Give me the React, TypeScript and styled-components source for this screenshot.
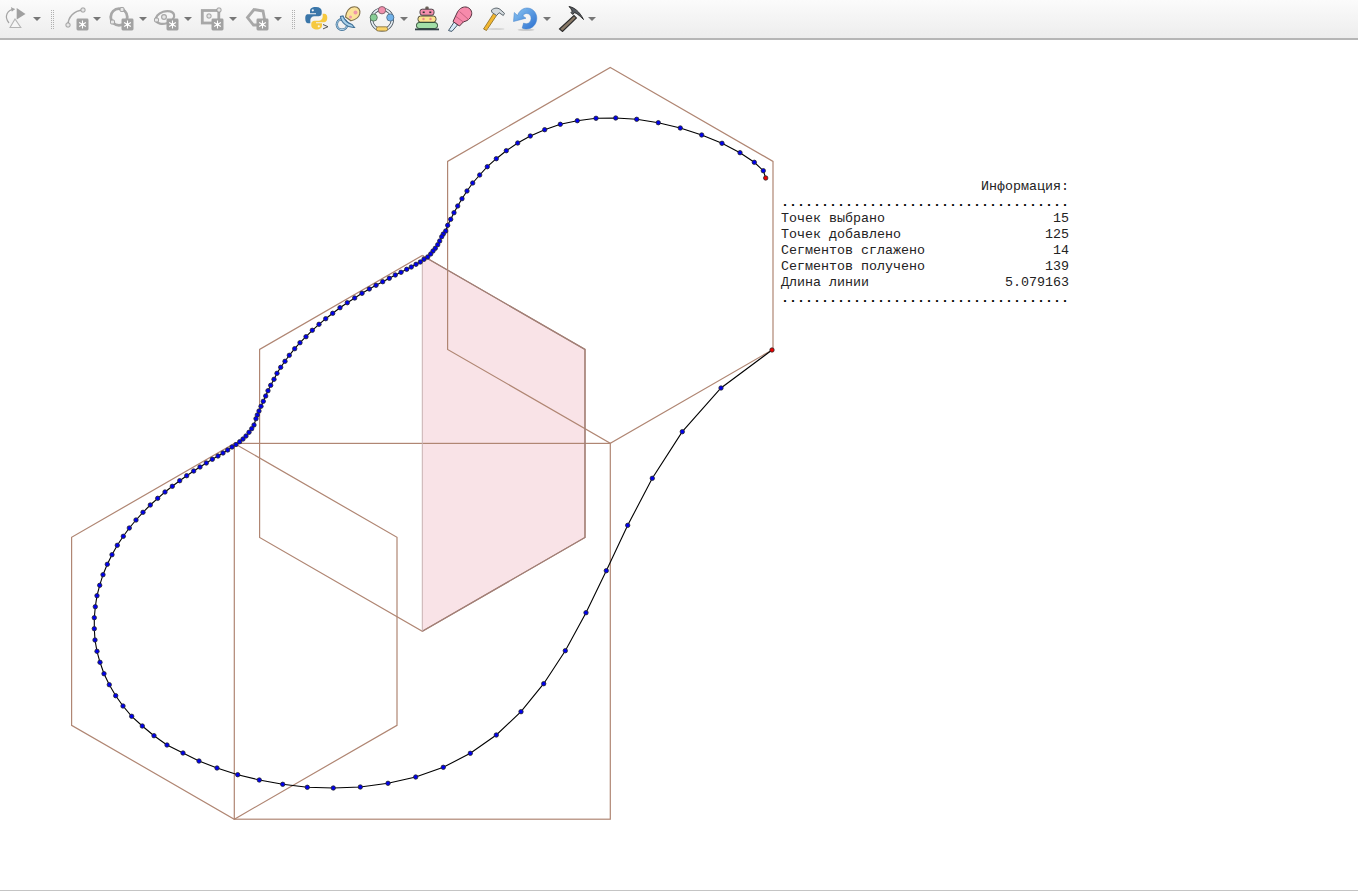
import React from "react";
import styled, { createGlobalStyle } from "styled-components";

const Global = createGlobalStyle`
  html, body { margin: 0; padding: 0; height: 100%; background: #fff; overflow: hidden; }
  #root { height: 100%; }
`;

const Page = styled.div`
  display: flex;
  flex-direction: column;
  height: 891px;
  width: 1358px;
`;

const Toolbar = styled.div`
  flex: 0 0 38px;
  display: flex;
  align-items: center;
  background: linear-gradient(#fbfbfb, #ededed);
  border-bottom: 2px solid #b6b6b6;
`;

const Icon = styled.svg.attrs({ width: 26, height: 26, viewBox: "0 0 26 26" })<{ $ml: number }>`
  flex: none;
  margin-left: ${(p) => p.$ml}px;
`;

const Caret = styled.span<{ $ml: number }>`
  flex: none;
  width: 0;
  height: 0;
  margin-left: ${(p) => p.$ml}px;
  border-left: 4.5px solid transparent;
  border-right: 4.5px solid transparent;
  border-top: 4.5px solid #777;
`;

const Grip = styled.span<{ $ml: number }>`
  flex: none;
  width: 3px;
  height: 19px;
  margin-left: ${(p) => p.$ml}px;
  background-image: radial-gradient(circle at 0.5px 0.5px, #b0b0b0 0.6px, transparent 0.7px);
  background-size: 2px 2px;
`;

const Canvas = styled.main`
  position: relative;
  flex: 1;
  background: #fff;
`;

const Drawing = styled.svg`
  display: block;
  width: 1358px;
  height: 849px;
`;

const StatusEdge = styled.div`
  flex: 0 0 1px;
  background: #c4c4c4;
`;

const InfoPanel = styled.section`
  position: absolute;
  left: 781px;
  top: 139px;
  width: 288px;
  font-family: "Liberation Mono", "Courier New", monospace;
  font-size: 13.33px;
  line-height: 16px;
  color: #222;
  white-space: pre;
`;

const InfoTitle = styled.div`
  text-align: right;
`;

const InfoDots = styled.div`
  font-weight: 700;
  overflow: hidden;
  color: #000;
`;

const InfoRow = styled.div`
  display: flex;
  justify-content: space-between;
`;

const GRAY = "#a8a8a8";

const Badge = ({ x, y }: { x: number; y: number }) => (
  <g>
    <rect x={x - 0.5} y={y - 0.5} width="12" height="12" rx="1.4" fill="#a2a2a2" />
    <g stroke="#fff" strokeWidth="1.1" fill="none">
      <path d={`M${x + 5.5} ${y + 1.6}v7.8M${x + 2.1} ${y + 3.5}l6.8 4M${x + 8.9} ${y + 3.5}l-6.800 4`} />
    </g>
    <circle cx={x + 5.5} cy={y + 5.5} r="1.5" fill="#fff" />
  </g>
);

const Node = ({ x, y }: { x: number; y: number }) => (
  <rect x={x - 2} y={y - 2} width="4" height="4" rx="1.2" fill="#e6e6e6" stroke="#9a9a9a" strokeWidth="1" />
);

const RotateTool = ({ ml }: { ml: number }) => (
  <Icon $ml={ml}>
    <path d="M14.700 2L23.500 8l-8.800 5.500z" fill="#a0a0a0" />
    <path d="M8 21.500l5-8.500 5.800 8.500z" fill="#f6f6f6" stroke="#b4b4b4" strokeWidth="1.100" />
    <path d="M12.500 3.200C5.500 3.600 1.500 10.500 7 17" fill="none" stroke="#a4a4a4" strokeWidth="1.200" />
    <path d="M9 1l3.800 2.200-3 2.600z" fill="#a4a4a4" />
  </Icon>
);

const ArcTool = ({ ml }: { ml: number }) => (
  <Icon $ml={ml}>
    <path d="M3 19C3 11 9 4.500 18 4" fill="none" stroke={GRAY} strokeWidth="1.500" />
    <Node x={3} y={19} />
    <Node x={18} y={4} />
    <Badge x={12} y={13} />
  </Icon>
);

const CircleTool = ({ ml }: { ml: number }) => (
  <Icon $ml={ml}>
    <circle cx="11" cy="11" r="8.300" fill="none" stroke={GRAY} strokeWidth="2.800" />
    <Node x={14} y={3.500} />
    <Node x={4.500} y={16} />
    <Badge x={14} y={13} />
  </Icon>
);

const EllipseTool = ({ ml }: { ml: number }) => (
  <Icon $ml={ml}>
    <ellipse cx="12" cy="11.500" rx="9.500" ry="6" transform="rotate(-18 12 11.500)" fill="none" stroke={GRAY} strokeWidth="2.200" />
    <circle cx="11" cy="11" r="2.400" fill="#e6e6e6" stroke={GRAY} strokeWidth="1.200" />
    <Node x={3.500} y={14} />
    <Badge x={14} y={13} />
  </Icon>
);

const RectTool = ({ ml }: { ml: number }) => (
  <Icon $ml={ml}>
    <rect x="3.300" y="4.500" width="16.500" height="12.500" fill="none" stroke={GRAY} strokeWidth="2.800" />
    <Node x={10} y={10} />
    <Node x={20} y={4} />
    <Badge x={13} y={13} />
  </Icon>
);

const PolygonTool = ({ ml }: { ml: number }) => (
  <Icon $ml={ml}>
    <path d="M3.500 11.500L10 3.500l9 1.500 1.500 8-5 6H9.500z" fill="none" stroke={GRAY} strokeWidth="2.800" />
    <Badge x={13} y={13} />
  </Icon>
);

const PythonTool = ({ ml }: { ml: number }) => (
  <Icon $ml={ml}>
    <path d="M13 1C8.300 1 7 2.700 7 5v2.300h6v1H4.800C2.500 8.300 2.300 10.500 2.300 12.700s.700 4.600 2.800 4.600h2.200v-3c0-2.300 1.700-4 4-4h4.300c1.800 0 3.100-1.300 3.100-3.100V5c0-2.300-1.900-4-5.700-4z" fill="#3a76a9" />
    <circle cx="9.800" cy="4.300" r="1.100" fill="#f2f6fa" />
    <path d="M13 23.500c4.500 0 6-1.700 6-4v-2.300h-6v-1h8.300c2.300 0 3-2.200 3-4.400S23.500 7.700 21.300 7.700h-1.600v3c0 2.300-1.700 4-4 4h-4.300c-1.800 0-3.100 1.300-3.100 3.100v1.700c0 2.300 2.200 4 5.700 4z" fill="#f6c93f" />
    <circle cx="15.800" cy="20.300" r="1.100" fill="#fff8dc" />
    <path d="M20 18.500l5 2.200-5 2.200" fill="#eee" stroke="#555" strokeWidth="1" />
  </Icon>
);

const PacifierTool = ({ ml }: { ml: number }) => (
  <Icon $ml={ml}>
    <circle cx="7" cy="18.500" r="5.200" fill="none" stroke="#3f7097" strokeWidth="2.400" />
    <circle cx="7" cy="18.500" r="5.200" fill="none" stroke="#b5d8ee" strokeWidth="1" />
    <path d="M8 10c1.500 4 4.500 7 9 8.500l2.500 3c-6.500.5-13.500-4.500-14-11z" fill="#a9d1ea" stroke="#3f7097" strokeWidth="1.100" />
    <path d="M10.500 11C11 6 14 .800 19.500.800c4 0 6 3.200 5.300 6.700-.7 4-5 6.500-8.800 7.300z" fill="#fbe39a" stroke="#7f6f4a" strokeWidth="1.100" />
    <circle cx="20.500" cy="6.500" r="2" fill="#ef97aa" />
    <circle cx="15.500" cy="11" r="1.500" fill="#ef97aa" />
  </Icon>
);

const RingsTool = ({ ml }: { ml: number }) => (
  <Icon $ml={ml}>
    <circle cx="13" cy="13.500" r="10.400" fill="none" stroke="#46505a" strokeWidth="3.200" />
    <circle cx="13" cy="13.500" r="10.400" fill="none" stroke="#e8f0f6" strokeWidth="1.500" />
    <circle cx="13" cy="4.200" r="3.700" fill="#f08fac" stroke="#6c5560" strokeWidth=".8" />
    <circle cx="4.700" cy="11.500" r="3.600" fill="#86cd95" stroke="#4e6a55" strokeWidth=".8" />
    <circle cx="21.300" cy="11.500" r="3.600" fill="#70b2ea" stroke="#4a6a86" strokeWidth=".8" />
    <rect x="7.500" y="20.800" width="11" height="4.200" rx="1.600" fill="#f9d36a" stroke="#7d6a3a" strokeWidth=".8" />
  </Icon>
);

const ToyTool = ({ ml }: { ml: number }) => (
  <Icon $ml={ml}>
    <rect x="11.300" y=".5" width="3.400" height="3" rx="1.200" fill="#6a6258" />
    <rect x="6" y="3.200" width="14" height="6" rx="2.200" fill="#f58fae" stroke="#4f4248" strokeWidth="1" />
    <rect x="8.700" y="5.500" width="2" height="1.600" fill="#333" />
    <rect x="15.300" y="5.500" width="2" height="1.600" fill="#333" />
    <rect x="4" y="10" width="18" height="6.200" rx="2.600" fill="#fbe38e" stroke="#4f4d38" strokeWidth="1" />
    <circle cx="9.500" cy="13" r="1.200" fill="#e88" />
    <circle cx="16.500" cy="13" r="1.200" fill="#e88" />
    <rect x="2.500" y="16.500" width="21" height="6" rx="2.600" fill="#a2dfa8" stroke="#34503a" strokeWidth="1" />
    <rect x="1" y="22.500" width="24" height="1.800" fill="#35444a" />
  </Icon>
);

const PipetteTool = ({ ml }: { ml: number }) => (
  <Icon $ml={ml}>
    <path d="M7.500 15.500L1.500 24.500l1.500 .5 2 .3L10.500 19z" fill="#d6eaf8" stroke="#44586a" strokeWidth="1" />
    <path d="M6 15.500L10 7c1.500-3.500 5-6.500 9-6 4.200.5 6.500 4.500 5.500 8-1 4.200-5 6.300-8 6.800l-4 4.200z" fill="#f68aab" stroke="#54343f" strokeWidth="1" />
    <path d="M9 10.500l8 6M12.500 5.500l9 8" stroke="#c05d7c" strokeWidth=".9" fill="none" />
  </Icon>
);

const HammerTool = ({ ml }: { ml: number }) => (
  <Icon $ml={ml}>
    <path d="M3.500 23L14.500 6l3 2L6.500 24.500z" fill="#f2b731" stroke="#8a6a20" strokeWidth=".8" />
    <path d="M11.500 4c3-2.300 6-2.500 8.500-.7l4.500 4-1.200 2.200-4.200-2.800-2.500 2.800-4.800-3.200z" fill="#d4dade" stroke="#5e686f" strokeWidth="1" />
    <ellipse cx="16" cy="23" rx="8.500" ry="1" fill="#d4d4d4" />
  </Icon>
);

const UndoTool = ({ ml }: { ml: number }) => (
  <Icon $ml={ml}>
    <defs>
      <linearGradient id="undoFill" x1="0" x2="1" y1="0" y2="1">
        <stop offset="0" stopColor="#8cc6f2" />
        <stop offset="1" stopColor="#2a6fd0" />
      </linearGradient>
    </defs>
    <ellipse cx="14" cy="23.800" rx="8.500" ry="1.300" fill="#ccc" />
    <path d="M5.500 9.500C7 5 11 2 15 2c5.500 0 9.800 4.500 9.800 10.200S20.500 23 14.500 23c-1.600 0-3.200-.3-4.300-1l1.400-5c.8.500 1.700.7 2.700.7 2.900 0 4.800-2.500 4.800-5.400s-2-4.800-4.500-4.800c-1.700 0-3 1-3.800 2.400l3.200 2.300L1.500 15.500 2.300 6.500z" fill="url(#undoFill)" stroke="#3f7ec8" strokeWidth=".5" />
  </Icon>
);

const PickTool = ({ ml }: { ml: number }) => (
  <Icon $ml={ml}>
    <path d="M1.500 23l14.500-13.500 2.400 2.400L4.500 25.500z" fill="#8a7a68" stroke="#2a2a2a" strokeWidth="1.100" />
    <path d="M11 .5c5.500 1 10.500 5 14.500 13-4.500-4.500-7.500-6.800-9.500-6.800L14.800 8.500 13 6.700l1.200-1.500C13.600 3.500 12.500 2 11 .5z" fill="#565b61" stroke="#242424" strokeWidth=".9" />
  </Icon>
);

const curve: [number, number][] = [
  [765.7, 178], [763.3, 170.7], [754.3, 162.3], [740, 152.7], [722, 143.3], [701.7, 135], [680.3, 128], [658.3, 122.7],
  [636.7, 119.3], [615.7, 118], [596, 118.3], [577.3, 120.7], [560.3, 124.3], [544.7, 129.7], [530.3, 136], [517.7, 143],
  [506.3, 150.7], [496.3, 158.7], [487.3, 166.7], [479.7, 175], [472.7, 183], [467, 191], [462, 198.7], [457.7, 206],
  [454, 212.7], [450.7, 219.3], [447.7, 225.3], [445.7, 231], [443.3, 234], [441.7, 236.7], [439.7, 241], [437.7, 244.7],
  [435.3, 248.3], [433, 251], [430.7, 254], [427.7, 257], [424, 259.3], [420.3, 262], [416, 264.3], [411.3, 267],
  [406.7, 269.3], [401, 272.3], [395.3, 275], [389.3, 278.3], [382.7, 281.7], [376, 285.3], [369.3, 289], [362, 293.3],
  [354.7, 298], [347.3, 302.7], [340, 307.7], [332.7, 313.3], [325.7, 318.7], [319, 324.3], [312.3, 330.3], [306, 336.7],
  [300, 342.7], [294.7, 348.7], [289.3, 355.3], [285, 361.3], [280.7, 367.3], [277, 373.3], [274, 379.3], [270.7, 385.3],
  [268, 390.7], [265.7, 396], [263.3, 401.3], [261, 406.3], [259, 411], [257.3, 415], [256, 418.7], [254, 425],
  [251.7, 428.7], [249, 432.3], [246, 436], [243, 439], [239.7, 441.7], [236, 444.5], [232, 447], [227.7, 450],
  [223, 453], [218, 456], [212.3, 459.3], [206.3, 463], [200, 467], [193.7, 471], [186.7, 475.7], [179.7, 480.7],
  [172.3, 486.3], [165, 492], [157.7, 498.3], [150.3, 505], [143, 512.3], [136, 520], [129.3, 528], [123.3, 536.3],
  [117.3, 545.3], [112, 554.7], [107.3, 564.3], [103, 574.7], [99.7, 585.3], [97, 595.7], [95.3, 606.7], [94.3, 617.7],
  [94.3, 628.7], [95, 640], [97, 651.3], [100, 662.3], [104, 673.7], [109.3, 684.7], [115.7, 695.7], [123, 706],
  [131.7, 716.3], [142.3, 726], [154, 735.7], [167, 745], [183, 753], [199, 761], [217, 768], [237.7, 774.7],
  [259.3, 780], [282.7, 784.3], [307.3, 787.3], [333.3, 788], [360.3, 787], [388, 783.3], [415.7, 777], [443.3, 767.3],
  [470.3, 753.3], [496.3, 735], [521, 711.7], [543.7, 683.7], [565.3, 650.7], [586, 612.7], [606.3, 570.7], [627.7, 525.3],
  [652.3, 478.3], [682.3, 431.7], [721, 388], [772, 350],
];

const hex = (cx: number, top: number) =>
  `${cx},${top} ${cx + 162.7},${top + 93.9} ${cx + 162.7},${top + 281.9} ${cx},${top + 375.8} ${cx - 162.7},${top + 281.9} ${cx - 162.7},${top + 93.9}`;

const EDGE = "#b08673";

const Scene = () => (
  <Drawing viewBox="0 40 1358 849">
    <polygon points="422.300,255.500 585,349.400 585,537.400 422.300,631.300" fill="#f9e3e7" />
    <g fill="none" stroke={EDGE} strokeWidth="1.200">
      <polygon points={hex(610.3, 67.5)} />
      <polygon points={hex(422.3, 255.5)} />
      <polygon points={hex(234.3, 443.4)} />
      <rect x="234.300" y="443.400" width="376" height="375.800" />
    </g>
    <path d="M422.300 255.500L585 349.400V537.400L422.300 631.300" fill="none" stroke="#a07f78" strokeWidth="1.200" />
    <path d="M422.300 255.500V631.300" fill="none" stroke="#c9b1b1" strokeWidth="1" />
    <polyline points={curve.map((p) => p.join(",")).join(" ")} fill="none" stroke="#000" strokeWidth="1.100" />
    {curve.map(([x, y], i) => {
      const end = i === 0 || i === curve.length - 1;
      return <circle key={i} cx={x} cy={y} r="2.200" fill={end ? "#f00000" : "#0000f0"} stroke="#2a2a2a" strokeWidth=".8" />;
    })}
  </Drawing>
);

const DOTS = ".".repeat(36);

const rows: [string, string][] = [
  ["Точек выбрано", "15"],
  ["Точек добавлено", "125"],
  ["Сегментов сглажено", "14"],
  ["Сегментов получено", "139"],
  ["Длина линии", "5.079163"],
];

export default function App() {
  return (
    <Page>
      <Global />
      <Toolbar>
        <RotateTool ml={2} />
        <Caret $ml={5} />
        <Grip $ml={10} />
        <ArcTool ml={11} />
        <Caret $ml={2} />
        <CircleTool ml={7} />
        <Caret $ml={5} />
        <EllipseTool ml={6} />
        <Caret $ml={5} />
        <RectTool ml={7} />
        <Caret $ml={4} />
        <PolygonTool ml={7} />
        <Caret $ml={4} />
        <Grip $ml={10} />
        <PythonTool ml={8} />
        <PacifierTool ml={6} />
        <RingsTool ml={8} />
        <Caret $ml={5} />
        <ToyTool ml={6} />
        <PipetteTool ml={7} />
        <HammerTool ml={7} />
        <UndoTool ml={6} />
        <Caret $ml={5} />
        <PickTool ml={7} />
        <Caret $ml={4} />
      </Toolbar>
      <Canvas>
        <Scene />
        <InfoPanel>
          <InfoTitle>Информация:</InfoTitle>
          <InfoDots>{DOTS}</InfoDots>
          {rows.map(([k, v]) => (
            <InfoRow key={k}>
              <span>{k}</span>
              <span>{v}</span>
            </InfoRow>
          ))}
          <InfoDots>{DOTS}</InfoDots>
        </InfoPanel>
      </Canvas>
      <StatusEdge />
    </Page>
  );
}
